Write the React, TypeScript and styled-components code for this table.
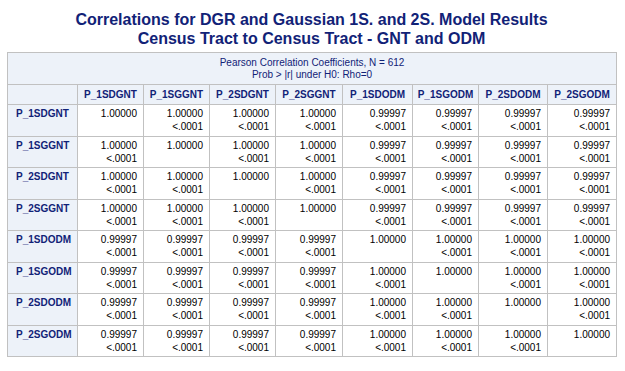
import React from 'react';
import styled, { createGlobalStyle } from 'styled-components';

const vars = ['P_1SDGNT', 'P_1SGGNT', 'P_2SDGNT', 'P_2SGGNT', 'P_1SDODM', 'P_1SGODM', 'P_2SDODM', 'P_2SGODM'];
const colWidths = [70, 66, 66, 66, 67, 70, 66, 69, 69];

const isOdm = (v: string) => v.endsWith('ODM');

const GlobalStyle = createGlobalStyle`
    body {
        margin: 0;
        background: #ffffff;
        font-family: 'Liberation Sans', Arial, sans-serif;
    }
`;

export default function App() {
    return (
        <>
            <GlobalStyle />
            <Report>
                <Title>
                    <div>Correlations for DGR and Gaussian 1S. and 2S. Model Results</div>
                    <div>Census Tract to Census Tract - GNT and ODM</div>
                </Title>
                <Table>
                    <colgroup>
                        {colWidths.map((w, i) => (
                            <col key={i} style={{ width: w }} />
                        ))}
                    </colgroup>
                    <thead>
                        <tr>
                            <Caption colSpan={9}>
                                Pearson Correlation Coefficients, N = 612
                                <br />
                                Prob &gt; |r| under H0: Rho=0
                            </Caption>
                        </tr>
                        <HeadRow>
                            <ColHead />
                            {vars.map((v) => (
                                <ColHead key={v}>{v}</ColHead>
                            ))}
                        </HeadRow>
                    </thead>
                    <tbody>
                        {vars.map((row) => (
                            <DataRow key={row}>
                                <RowHead>{row}</RowHead>
                                {vars.map((col) => {
                                    const r = isOdm(row) === isOdm(col) ? '1.00000' : '0.99997';
                                    return (
                                        <Cell key={col}>
                                            <div>{r}</div>
                                            {row !== col && <div>&lt;.0001</div>}
                                        </Cell>
                                    );
                                })}
                            </DataRow>
                        ))}
                    </tbody>
                </Table>
            </Report>
        </>
    );
}

const Report = styled.div`
    width: 609px;
    margin-left: 7px;
    padding-top: 10px;
`;

const Title = styled.div`
    text-align: center;
    color: #112277;
    font-size: 16px;
    font-weight: 700;
    line-height: 19px;
    margin-bottom: 4px;
`;

const Table = styled.table`
    width: 609px;
    table-layout: fixed;
    border-collapse: collapse;
    border: 1px solid #c1c1c1;
    font-size: 10px;
`;

const Caption = styled.th`
    height: 31px;
    padding: 0;
    background: #edf2f9;
    border: 1px solid #c1c1c1;
    color: #112277;
    font-weight: 400;
    line-height: 12px;
    text-align: center;
    vertical-align: middle;
`;

const HeadRow = styled.tr`
    height: 20px;
`;

const ColHead = styled.th`
    padding: 0 4px;
    background: #edf2f9;
    border: 1px solid #c1c1c1;
    color: #112277;
    font-weight: 700;
    text-align: center;
    vertical-align: middle;
    white-space: nowrap;
`;

const DataRow = styled.tr`
    height: 31.5px;
`;

const RowHead = styled.th`
    padding: 2px 4px 0 8px;
    background: #edf2f9;
    border: 1px solid #c1c1c1;
    color: #112277;
    font-weight: 700;
    line-height: 13px;
    text-align: left;
    vertical-align: top;
    white-space: nowrap;
`;

const Cell = styled.td`
    padding: 2px 6px 0 4px;
    background: #ffffff;
    border: 1px solid #c1c1c1;
    color: #000000;
    line-height: 13px;
    text-align: right;
    vertical-align: top;
    white-space: nowrap;
`;
